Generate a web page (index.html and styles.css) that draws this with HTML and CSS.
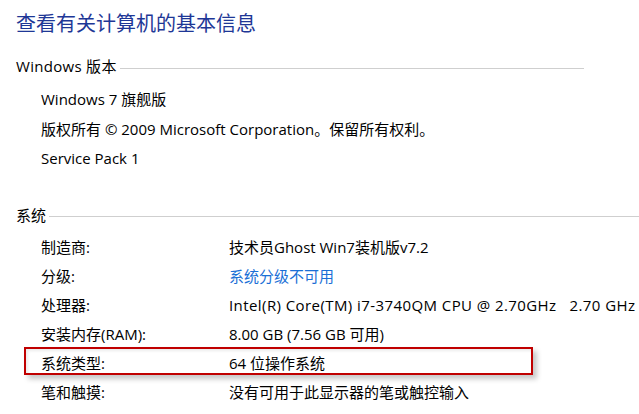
FILE: index.html
```html
<!DOCTYPE html>
<html lang="zh-CN">
<head>
<meta charset="utf-8">
<title>查看有关计算机的基本信息</title>
<link rel="stylesheet" href="styles.css">
</head>
<body>
<main class="page">
  <h1 class="title">查看有关计算机的基本信息</h1>

  <section class="section section-edition">
    <h2 class="section-head"><span class="section-name">Windows 版本</span><span class="rule"></span></h2>
    <ul class="items">
      <li>Windows 7 旗舰版</li>
      <li>版权所有 © 2009 Microsoft Corporation。保留所有权利。</li>
      <li>Service Pack 1</li>
    </ul>
  </section>

  <section class="section section-system">
    <h2 class="section-head"><span class="section-name">系统</span><span class="rule"></span></h2>
    <div class="rows">
      <div class="row"><span class="label">制造商:</span><span class="value">技术员Ghost Win7装机版v7.2</span></div>
      <div class="row"><span class="label">分级:</span><span class="value link">系统分级不可用</span></div>
      <div class="row"><span class="label">处理器:</span><span class="value value-cpu">Intel(R) Core(TM) i7-3740QM CPU @ 2.70GHz&nbsp;&nbsp;&nbsp;2.70 GHz</span></div>
      <div class="row"><span class="label">安装内存(RAM):</span><span class="value">8.00 GB (7.56 GB 可用)</span></div>
      <div class="row row-marked"><span class="label">系统类型:</span><span class="value">64 位操作系统</span><span class="mark"></span></div>
      <div class="row"><span class="label">笔和触摸:</span><span class="value">没有可用于此显示器的笔或触控输入</span></div>
    </div>
  </section>
</main>
</body>
</html>
```

FILE: styles.css
```css
html, body {
  margin: 0;
  padding: 0;
  background: #ffffff;
}

body {
  font-family: "Open Sans", "Noto Sans CJK SC", sans-serif;
  font-size: 15px;
  color: #000000;
  overflow: hidden;
}

.page {
  padding-left: 16px;
}

.title {
  margin: 10px 0 0 0;
  font-size: 20px;
  line-height: 28px;
  font-weight: normal;
  color: #1e3796;
}

.section-head {
  display: flex;
  align-items: center;
  margin: 0;
  font-size: 15px;
  font-weight: normal;
  line-height: 20px;
  height: 20px;
}

.section-name {
  white-space: nowrap;
}

.section-edition .section-name {
  letter-spacing: 0.3px;
}

.rule {
  flex: 1;
  height: 1px;
  background: #cfcfcf;
  margin-left: 3px;
  margin-top: 5px;
}

.section-edition .section-head {
  margin-top: 18px;
  margin-right: 55px;
}

.section-system .section-head {
  margin-top: 31px;
}

.section-system .rule {
  margin-top: 3px;
}

.items {
  list-style: none;
  margin: 9px 0 0 0;
  padding: 0 0 0 25px;
}

.items li {
  line-height: 29.5px;
  white-space: nowrap;
}

.rows {
  margin-top: 8px;
  padding-left: 25px;
}

.row {
  position: relative;
  display: grid;
  grid-template-columns: 188px 1fr;
  line-height: 29px;
  white-space: nowrap;
}

.value-cpu {
  letter-spacing: 0.42px;
}

.link {
  color: #1a6fd6;
}

.mark {
  position: absolute;
  left: -17px;
  top: -2px;
  width: 505px;
  height: 24px;
  border: 2px solid #c00000;
  box-shadow: 4px 4px 5px rgba(0, 0, 0, 0.22), inset 2px 2px 3px rgba(0, 0, 0, 0.08);
  pointer-events: none;
}
```
